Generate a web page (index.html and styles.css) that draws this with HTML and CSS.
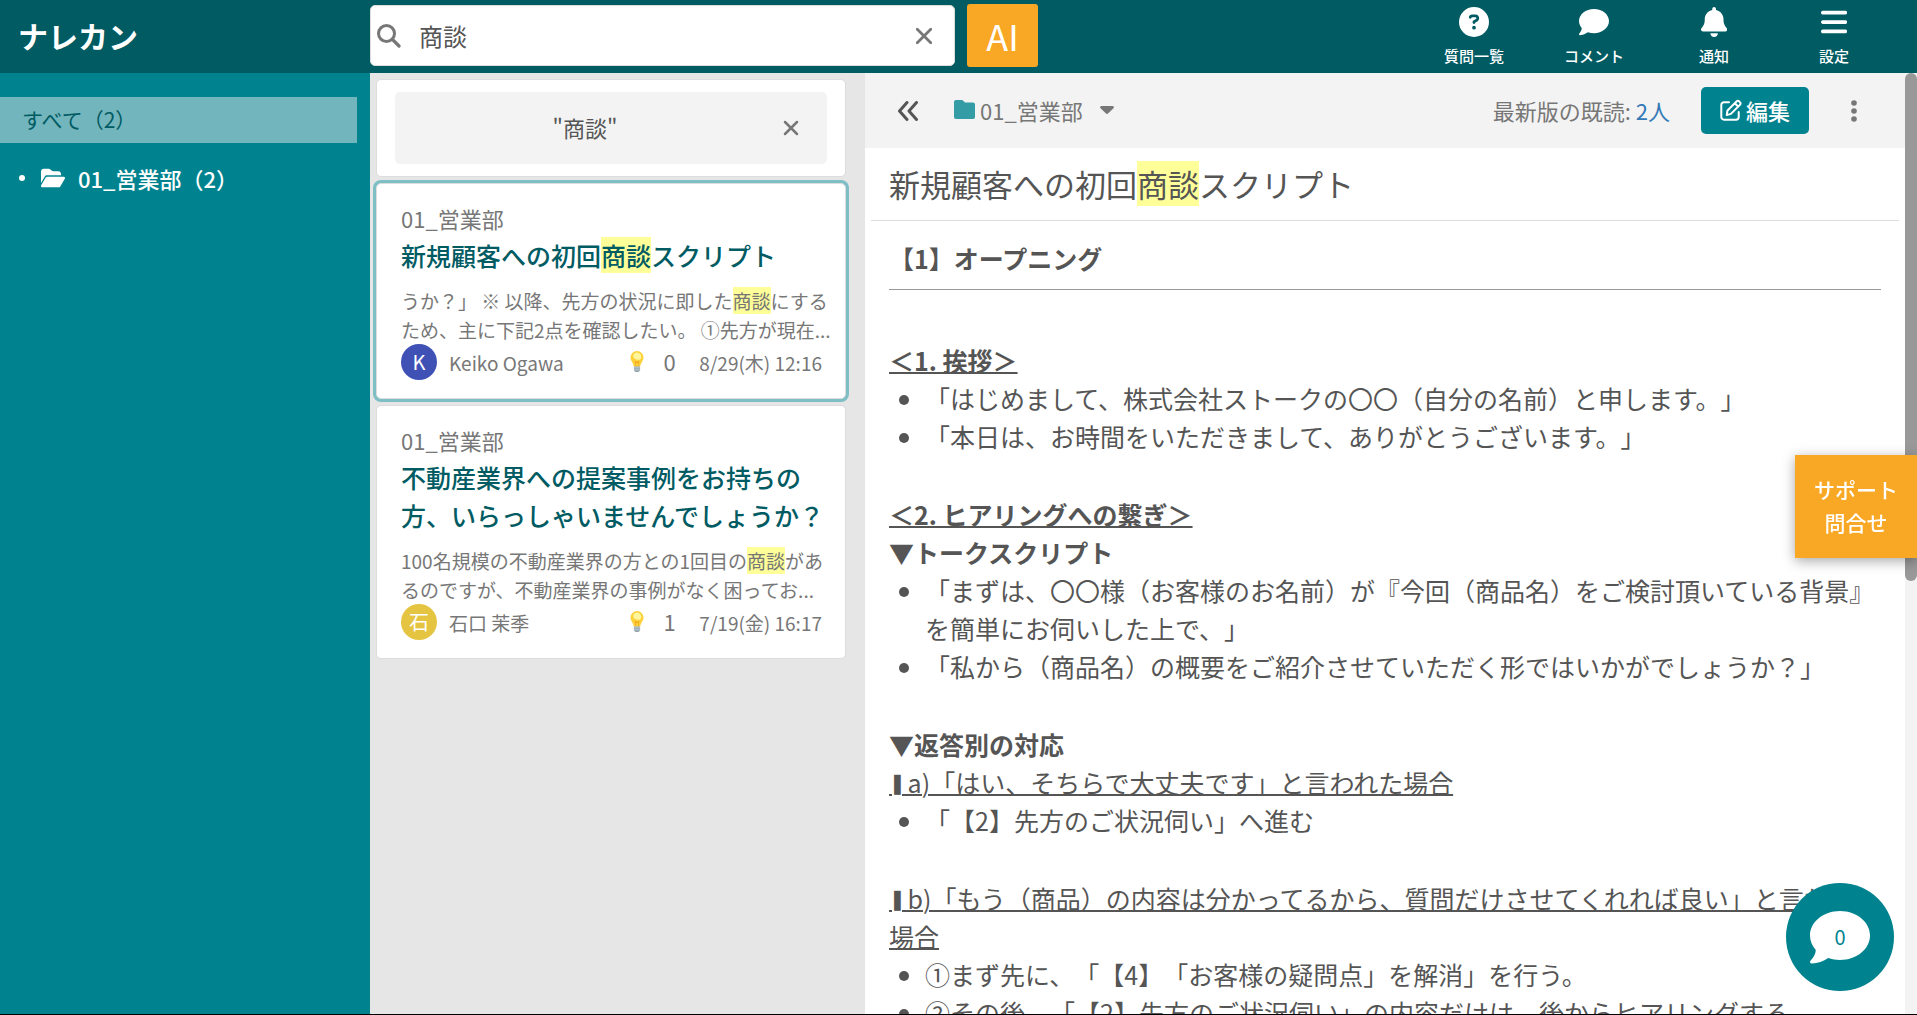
FILE: index.html
```html
<!DOCTYPE html>
<html lang="ja">
<head>
<meta charset="utf-8">
<meta name="viewport" content="width=device-width, initial-scale=1">
<title>ナレカン</title>
<link rel="stylesheet" href="styles.css">
</head>
<body>
<header class="topbar">
  <h1 class="logo">ナレカン</h1>
  <form class="search" role="search">
    <svg class="search-icon" viewBox="0 0 24 24" aria-hidden="true"><circle cx="9.500" cy="9.500" r="8" fill="none" stroke="currentColor" stroke-width="3"/><path d="M15.500 15.500 22 22" stroke="currentColor" stroke-width="3.200" stroke-linecap="round"/></svg>
    <input class="search-input" type="text" aria-label="検索" value="商談">
    <button class="icon-button" type="button" aria-label="クリア"><svg class="cross" viewBox="0 0 16 16"><path d="M2 2 14 14M14 2 2 14"/></svg></button>
  </form>
  <button class="ai-button" type="button">AI</button>
  <nav class="topnav">
    <a href="#questions"><svg viewBox="0 0 512 512" aria-hidden="true"><path fill-rule="evenodd" d="M256 512A256 256 0 1 0 256 0a256 256 0 1 0 0 512zM169.800 165.300c7.900-22.300 29.100-37.300 52.800-37.300h58.300c34.900 0 63.100 28.300 63.100 63.100 0 22.600-12.100 43.500-31.700 54.800L280 264.400c-.2 13-10.900 23.600-24 23.600-13.300 0-24-10.700-24-24v-13.500c0-8.600 4.600-16.500 12.100-20.800l44.300-25.400c4.700-2.700 7.600-7.700 7.600-13.100 0-8.400-6.800-15.100-15.100-15.100h-58.300c-3.400 0-6.400 2.100-7.500 5.300l-.4 1.200c-4.400 12.500-18.200 19-30.600 14.600s-19-18.200-14.600-30.600l.3-1.300zM224 352a32 32 0 1 1 64 0 32 32 0 1 1-64 0z"/></svg>質問一覧</a>
    <a href="#comments"><svg viewBox="0 0 512 512" aria-hidden="true"><path d="M512 240c0 114.900-114.600 208-256 208-37.100 0-72.300-6.400-104.100-17.900-11.900 8.700-31.300 20.600-54.300 30.600C73.600 471.100 44.700 480 16 480c-6.500 0-12.300-3.900-14.800-9.900s-1.100-12.800 3.400-17.400l.3-.3c.3-.3.7-.7 1.300-1.400 1.100-1.200 2.800-3.100 4.900-5.700 4.100-5 9.600-12.400 15.200-21.600 10-16.600 19.500-38.400 21.400-62.900C17.700 326.800 0 285.100 0 240 0 125.100 114.600 32 256 32s256 93.100 256 208z"/></svg>コメント</a>
    <a href="#notices"><svg viewBox="0 0 448 512" aria-hidden="true"><path d="M224 0c-17.700 0-32 14.300-32 32v19.200C119 66 64 130.600 64 208v18.800c0 47-17.300 92.400-48.500 127.600l-7.400 8.300c-8.400 9.400-10.400 22.900-5.300 34.400S19.400 416 32 416h384c12.600 0 24-7.400 29.200-18.900s3.100-25-5.300-34.400l-7.400-8.300C401.300 319.200 384 273.900 384 226.800V208c0-77.400-55-142-128-156.800V32c0-17.700-14.300-32-32-32zm45.300 493.300c12-12 18.700-28.300 18.700-45.300H160c0 17 6.700 33.300 18.700 45.300S207 512 224 512s33.300-6.700 45.300-18.700z"/></svg>通知</a>
    <a href="#settings"><svg viewBox="0 0 448 512" aria-hidden="true"><path d="M0 96c0-17.700 14.300-32 32-32h384c17.700 0 32 14.300 32 32s-14.300 32-32 32H32C14.300 128 0 113.700 0 96zm0 160c0-17.700 14.300-32 32-32h384c17.700 0 32 14.300 32 32s-14.300 32-32 32H32c-17.700 0-32-14.300-32-32zm448 160c0 17.700-14.300 32-32 32H32c-17.700 0-32-14.300-32-32s14.300-32 32-32h384c17.700 0 32 14.300 32 32z"/></svg>設定</a>
  </nav>
</header>

<div class="workspace">
  <nav class="sidebar">
    <a class="side-all" href="#all">すべて（2）</a>
    <a class="side-folder" href="#folder-01">
      <span class="side-dot"></span>
      <svg class="folder-open" viewBox="0 0 576 512" aria-hidden="true"><path d="M88.700 223.800 0 375.800V96c0-35.300 28.700-64 64-64h117.500c17 0 33.300 6.700 45.300 18.700l26.500 26.500c12 12 28.300 18.700 45.300 18.700H416c35.300 0 64 28.700 64 64v32H144c-22.800 0-43.800 12.100-55.300 31.800zm27.600 16.100C122.100 230 132.600 224 144 224h400c11.500 0 22 6.100 27.700 16.100s5.700 22.200-.1 32.100l-112 192C453.900 474 443.400 480 432 480H32c-11.500 0-22-6.100-27.700-16.100s-5.700-22.200.1-32.100l112-192z"/></svg>
      <span>01_営業部（2）</span>
    </a>
  </nav>

  <section class="results" aria-label="検索結果">
    <div class="card filter-card">
      <div class="chip">
        <span class="chip-text">"商談"</span>
        <button class="icon-button" type="button" aria-label="条件を外す"><svg class="cross cross-small" viewBox="0 0 16 16"><path d="M2 2 14 14M14 2 2 14"/></svg></button>
      </div>
    </div>

    <article class="card result selected">
      <p class="result-folder">01_営業部</p>
      <h2 class="result-title">新規顧客への初回<mark>商談</mark>スクリプト</h2>
      <p class="snippet">うか？」 ※ 以降、先方の状況に即した<mark>商談</mark>にする<br>ため、主に下記2点を確認したい。 ①先方が現在...</p>
      <footer class="meta">
        <span class="avatar">K</span><span class="author">Keiko Ogawa</span>
        <svg class="bulb" viewBox="0 0 14 22" aria-hidden="true"><path fill="#fdd13a" d="M7 0a6.500 6.500 0 0 1 6.500 6.600c0 3.400-2.600 5-3.300 8.900H3.800C3.100 11.600.5 10 .5 6.600A6.500 6.500 0 0 1 7 0z"/><path fill="#fff59d" d="M7 1.500a4.500 4.500 0 0 1 4.300 4.800C11.300 9 7.500 9.500 5 8 1.500 5.800 3.500 1.500 7 1.500z"/><path fill="#f5a623" d="M5.500 15.500 4.800 10h.8l1.400 1 1.400-1h.8l-.7 5.500h-.7l.5-4-1.300.8-1.300-.8.5 4z"/><path fill="#90a4ae" d="M3.900 15.500h6.200v4L8.500 21h-3l-1.600-1.500z"/><path fill="#cfd8dc" d="M4 16.500h6v.8H4zm0 2h6v.7H4z"/></svg>
        <span class="likes">0</span><time class="date">8/29(木) 12:16</time>
      </footer>
    </article>

    <article class="card result">
      <p class="result-folder">01_営業部</p>
      <h2 class="result-title">不動産業界への提案事例をお持ちの<br>方、いらっしゃいませんでしょうか？</h2>
      <p class="snippet">100名規模の不動産業界の方との1回目の<mark>商談</mark>があ<br>るのですが、不動産業界の事例がなく困ってお...</p>
      <footer class="meta">
        <span class="avatar avatar-gold">石</span><span class="author">石口 茉季</span>
        <svg class="bulb" viewBox="0 0 14 22" aria-hidden="true"><path fill="#fdd13a" d="M7 0a6.500 6.500 0 0 1 6.500 6.600c0 3.400-2.600 5-3.300 8.900H3.800C3.100 11.600.5 10 .5 6.600A6.500 6.500 0 0 1 7 0z"/><path fill="#fff59d" d="M7 1.500a4.500 4.500 0 0 1 4.300 4.800C11.300 9 7.500 9.500 5 8 1.500 5.800 3.500 1.500 7 1.500z"/><path fill="#f5a623" d="M5.500 15.500 4.800 10h.8l1.400 1 1.400-1h.8l-.7 5.500h-.7l.5-4-1.300.8-1.300-.8.5 4z"/><path fill="#90a4ae" d="M3.900 15.500h6.200v4L8.500 21h-3l-1.600-1.500z"/><path fill="#cfd8dc" d="M4 16.500h6v.8H4zm0 2h6v.7H4z"/></svg>
        <span class="likes">1</span><time class="date">7/19(金) 16:17</time>
      </footer>
    </article>
  </section>

  <main class="detail">
    <div class="detail-page">
      <div class="toolbar">
        <button class="icon-button collapse" type="button" aria-label="一覧を閉じる"><svg viewBox="0 0 20 20"><path d="M9 1.500 1.500 10 9 18.500M18.500 1.500 11 10l7.500 8.500"/></svg></button>
        <button class="folder-picker" type="button">
          <svg class="folder" viewBox="0 0 21 19" aria-hidden="true"><path d="M0 2a2 2 0 0 1 2-2h5.500a2.500 2.500 0 0 1 2 1l.9 1a2 2 0 0 0 1.500.6H19a2 2 0 0 1 2 2V17a2 2 0 0 1-2 2H2a2 2 0 0 1-2-2z"/></svg>
          <span>01_営業部</span>
          <svg class="caret" viewBox="0 0 14 8" aria-hidden="true"><path d="M1.500 0h11a1.300 1.300 0 0 1 1 2.200l-5.500 5.300a1.400 1.400 0 0 1-2 0L.5 2.200a1.300 1.300 0 0 1 1-2.200z"/></svg>
        </button>
        <p class="read-count">最新版の既読: <a href="#readers">2人</a></p>
        <button class="edit-button" type="button"><svg viewBox="0 0 22 22" aria-hidden="true"><path d="M9 3.200H4A2.700 2.700 0 0 0 1.300 6v12A2.700 2.700 0 0 0 4 20.700h12a2.700 2.700 0 0 0 2.700-2.700v-5"/><path d="m7.500 11.500 9-9a2 2 0 0 1 2.800 0l.6.600a2 2 0 0 1 0 2.800l-9 9-4.200 1.200zM14.800 4.200l3.300 3.300"/></svg>編集</button>
        <button class="icon-button kebab" type="button" aria-label="メニュー"><svg viewBox="0 0 6 22"><circle cx="3" cy="3" r="2.800"/><circle cx="3" cy="11" r="2.800"/><circle cx="3" cy="19" r="2.800"/></svg></button>
      </div>

      <h2 class="doc-title">新規顧客への初回<mark>商談</mark>スクリプト</h2>
      <div class="doc">
        <h3 class="doc-heading">【1】オープニング</h3>
        <section>
          <h4><u>＜1. 挨拶＞</u></h4>
          <ul>
            <li>「はじめまして、株式会社ストークの〇〇（自分の名前）と申します。」</li>
            <li>「本日は、お時間をいただきまして、ありがとうございます。」</li>
          </ul>
        </section>
        <section>
          <h4><u>＜2. ヒアリングへの繋ぎ＞</u></h4>
          <h4>▼トークスクリプト</h4>
          <ul>
            <li>「まずは、〇〇様（お客様のお名前）が『今回（商品名）をご検討頂いている背景』を簡単にお伺いした上で、」</li>
            <li>「私から（商品名）の概要をご紹介させていただく形ではいかがでしょうか？」</li>
          </ul>
        </section>
        <section>
          <h4>▼返答別の対応</h4>
          <p><u><span class="bar">❚</span> a)「はい、そちらで大丈夫です」と言われた場合</u></p>
          <ul>
            <li>「【2】先方のご状況伺い」へ進む</li>
          </ul>
        </section>
        <section>
          <p><u><span class="bar">❚</span> b)「もう（商品）の内容は分かってるから、質問だけさせてくれれば良い」と言われた場合</u></p>
          <ul>
            <li>①まず先に、「【4】「お客様の疑問点」を解消」を行う。</li>
            <li>②その後、「【2】先方のご状況伺い」の内容だけは、後からヒアリングする</li>
          </ul>
        </section>
      </div>
    </div>
    <div class="scroll-track"><div class="scroll-thumb"></div></div>
  </main>
</div>

<button class="support" type="button">サポート<br>問合せ</button>
<button class="chat" type="button" aria-label="コメント 0件">
  <svg viewBox="0 0 60 52" aria-hidden="true"><path d="M30 0c16.600 0 30 10.900 30 24.500S46.600 49 30 49c-4.200 0-8.200-.7-11.800-1.900C13.500 50.500 7.500 52.600 2 52.600c-2 0-2.600-2-1.200-3.300C3.800 46.400 5.500 43 5.800 39 2.200 35 0 30 0 24.500 0 10.900 13.400 0 30 0z"/></svg>
  <span>0</span>
</button>
</body>
</html>
```
FILE: styles.css
```css
* {
  box-sizing: border-box;
}

:root {
  --deep: #005b63;
  --teal: #00838f;
  --orange: #f9a825;
  --text: #555;
  --muted: #777;
}

body {
  display: flex;
  flex-direction: column;
  height: 100vh;
  margin: 0;
  overflow: hidden;
  border-bottom: 1px solid #000;
  font-family: "Noto Sans CJK JP", "Noto Sans", sans-serif;
  font-size: 22px;
  text-spacing-trim: space-all;
  color: var(--text);
}

h1, h2, h3, h4, p, ul {
  margin: 0;
}

a {
  text-decoration: none;
}

button {
  padding: 0;
  border: 0;
  background: none;
  color: inherit;
  font: inherit;
  cursor: pointer;
}

svg {
  display: block;
  fill: currentColor;
}

mark {
  background: #ffff99;
  color: inherit;
}

.icon-button {
  display: grid;
  place-items: center;
  color: var(--muted);
}

.cross {
  width: 18px;
  height: 18px;
  fill: none;
  stroke: currentColor;
  stroke-width: 2.5;
  stroke-linecap: round;
}

.cross-small {
  width: 16px;
  height: 16px;
}

/* Top bar */
.topbar {
  display: flex;
  align-items: center;
  flex: none;
  height: 73px;
  padding: 0 23px 2px 0;
  background: var(--deep);
  color: #fff;
}

.logo {
  flex: none;
  width: 370px;
  padding-left: 18px;
  font-size: 30px;
  line-height: 71px;
}

.search {
  display: flex;
  align-items: center;
  flex: 0 1 585px;
  height: 61px;
  padding: 0 21px 0 6px;
  border: 1px solid #ddd;
  border-radius: 5px;
  background: #fff;
}

.search-icon {
  flex: none;
  width: 24px;
  height: 24px;
  color: var(--muted);
}

.search-input {
  flex: 1;
  min-width: 0;
  padding: 0 18px;
  border: 0;
  outline: 0;
  background: none;
  color: var(--text);
  font: inherit;
  font-size: 24px;
}

.ai-button {
  flex: none;
  width: 71px;
  height: 63px;
  margin-left: 12px;
  border-radius: 3px;
  background: var(--orange);
  font-size: 36px;
  line-height: 63px;
}

.topnav {
  display: flex;
  margin-left: auto;
  padding-top: 2px;
}

.topnav a {
  display: flex;
  flex-direction: column;
  align-items: center;
  gap: 8px;
  width: 120px;
  color: #fff;
  font-size: 15px;
  font-weight: 500;
  line-height: 22px;
}

.topnav svg {
  height: 30px;
}

/* Columns */
.workspace {
  display: grid;
  grid-template-columns: 370px 495px minmax(0, 1fr);
  flex: 1;
  min-height: 0;
}

.sidebar {
  padding-top: 24px;
  background: var(--teal);
}

.side-all {
  display: block;
  margin-right: 13px;
  padding: 0 0 2px 22px;
  background: #73b5bc;
  color: var(--deep);
  font-size: 21px;
  line-height: 44px;
}

.side-folder {
  display: flex;
  align-items: center;
  margin-top: 12px;
  padding-left: 19px;
  color: #fff;
  font-weight: 500;
  line-height: 46px;
}

.side-dot {
  width: 6px;
  height: 6px;
  border-radius: 50%;
  background: #fff;
}

.folder-open {
  width: 24px;
  height: 22px;
  margin: 0 13px 0 16px;
}

/* Results */
.results {
  display: flex;
  flex-direction: column;
  gap: 6px;
  padding: 6px 19px 0 6px;
  background: #e6e6e6;
}

.card {
  border: 1px solid #ddd;
  border-radius: 5px;
  background: #fff;
}

.filter-card {
  padding: 12px 18px;
}

.chip {
  display: flex;
  align-items: center;
  height: 72px;
  padding-right: 28px;
  border-radius: 5px;
  background: #f3f3f3;
}

.chip-text {
  flex: 1;
  padding: 0 8px 2px 0;
  text-align: center;
}

.result {
  padding: 16px 17px 18px 24px;
}

.selected {
  box-shadow: 0 0 0 3px #7dbfc5;
}

.result-folder {
  color: var(--muted);
  line-height: 36px;
}

.result-title {
  color: var(--deep);
  font-size: 25px;
  font-weight: 500;
  line-height: 38px;
}

.snippet {
  margin-top: 12px;
  color: var(--muted);
  font-size: 19px;
  line-height: 29px;
  white-space: nowrap;
}

.meta {
  display: flex;
  align-items: center;
  height: 36px;
  padding-right: 6px;
  color: var(--muted);
  font-size: 19px;
}

.avatar {
  width: 36px;
  margin-right: 12px;
  border-radius: 50%;
  background: #3f51b5;
  color: #fff;
  font-size: 20px;
  line-height: 36px;
  text-align: center;
}

.avatar-gold {
  background: #e5c441;
}

.author {
  flex: 1;
}

.bulb {
  width: 14px;
  height: 22px;
}

.likes {
  width: 51px;
  padding-bottom: 3px;
  text-align: center;
  font-size: 22px;
}

.date {
  width: 127px;
  text-align: right;
}

/* Detail */
.detail {
  display: flex;
  min-height: 0;
  background: #fff;
}

.detail-page {
  flex: 1;
  min-width: 0;
  overflow: hidden;
}

.toolbar {
  display: flex;
  align-items: center;
  height: 75px;
  padding: 0 48px 0 33px;
  background: #f3f3f3;
  color: var(--muted);
}

.collapse {
  margin-right: 36px;
  color: var(--text);
}

.collapse svg {
  width: 20px;
  height: 20px;
  fill: none;
  stroke: currentColor;
  stroke-width: 3;
  stroke-linecap: round;
  stroke-linejoin: round;
}

.folder-picker {
  display: flex;
  align-items: center;
  padding-bottom: 2px;
}

.folder {
  width: 21px;
  height: 19px;
  margin-right: 5px;
  color: #339ca5;
}

.caret {
  width: 14px;
  height: 8px;
  margin-left: 17px;
}

.read-count {
  margin-left: auto;
  padding-bottom: 2px;
}

.read-count a {
  color: #337ab7;
}

.edit-button {
  display: flex;
  align-items: center;
  gap: 4px;
  height: 47px;
  margin: 0 42px 0 31px;
  padding: 0 19px 1px;
  border-radius: 5px;
  background: var(--teal);
  color: #fff;
  font-weight: 500;
}

.edit-button svg {
  width: 22px;
  height: 22px;
  fill: none;
  stroke: currentColor;
  stroke-width: 2;
  stroke-linecap: round;
  stroke-linejoin: round;
}

.kebab svg {
  width: 6px;
  height: 22px;
}

.doc-title {
  margin: 0 6px;
  padding: 12px 18px 13px;
  border-bottom: 1px solid #ddd;
  font-size: 31px;
  font-weight: 400;
  line-height: 47px;
}

.doc {
  padding: 18px 16px 18px 24px;
  font-size: 25px;
  line-height: 38px;
}

.doc section {
  margin-bottom: 40px;
}

.doc-heading {
  margin: 0 8px 51px 0;
  padding-bottom: 12px;
  border-bottom: 1px solid #999;
  font-size: 25px;
}

.doc h4 {
  font-size: 25px;
}

.doc u {
  text-decoration-thickness: 2px;
}

.bar {
  margin-right: -4px;
  font-size: 20px;
  line-height: 1;
  vertical-align: 3px;
}

.doc ul {
  padding-left: 36px;
}

.scroll-track {
  flex: none;
  width: 12px;
  background: #f3f3f3;
}

.scroll-thumb {
  height: 54%;
  border-radius: 6px;
  background: #999;
}

/* Floating controls */
.support {
  position: fixed;
  top: 455px;
  right: 0;
  padding: 18px 19px 19px;
  background: var(--orange);
  box-shadow: 0 3px 12px rgba(0, 0, 0, 0.35);
  color: #fff;
  font-size: 21px;
  font-weight: 500;
  line-height: 33px;
}

.chat {
  position: fixed;
  right: 23px;
  bottom: 24px;
  display: grid;
  place-items: center;
  width: 108px;
  height: 108px;
  border-radius: 50%;
  background: var(--teal);
}

.chat svg,
.chat span {
  grid-area: 1 / 1;
}

.chat svg {
  width: 60px;
  height: 52px;
  color: #fff;
  overflow: visible;
}

.chat span {
  padding-bottom: 2px;
  color: var(--teal);
  font-size: 20px;
}
```
